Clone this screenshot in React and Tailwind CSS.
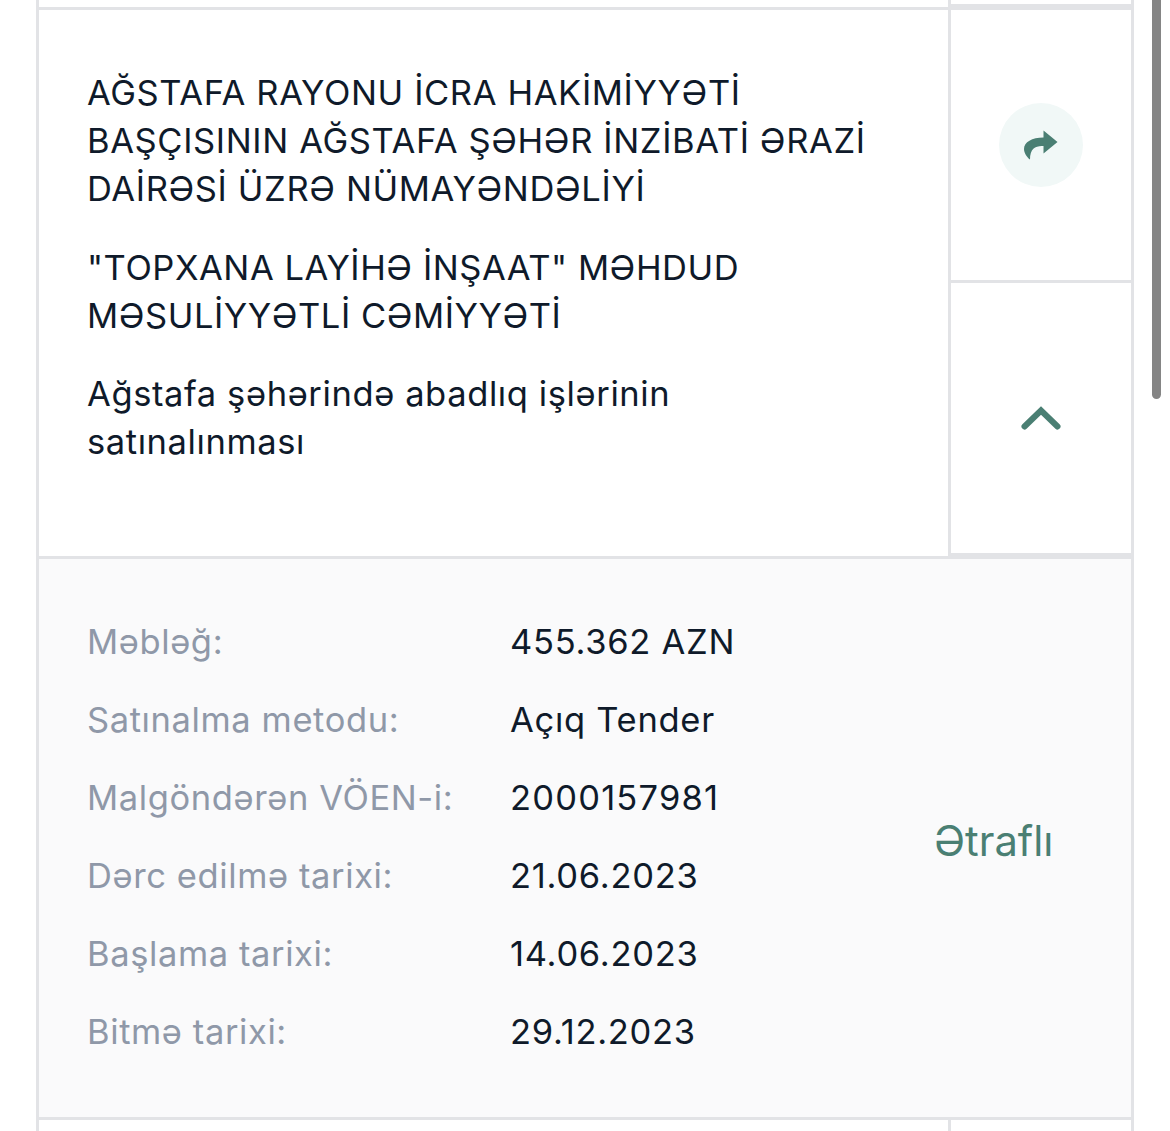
import React from "react";

const rows = [
  ["Məbləğ:", "455.362 AZN"],
  ["Satınalma metodu:", "Açıq Tender"],
  ["Malgöndərən VÖEN-i:", "2000157981"],
  ["Dərc edilmə tarixi:", "21.06.2023"],
  ["Başlama tarixi:", "14.06.2023"],
  ["Bitmə tarixi:", "29.12.2023"],
];

export default function App() {
  return (
    <div className="relative w-[1170px] h-[1131px] overflow-hidden bg-white pl-[36px] text-[#0f1a2a] font-['Inter',sans-serif]">
      <div className="w-[1098px] h-[1131px] border-x-[3px] border-[#e2e3e6] flex flex-col">
        <div className="flex h-[7px] shrink-0">
          <div className="flex-1" />
          <div className="w-[183px] border-l-[3px] border-b-[3px] border-[#e2e3e6]" />
        </div>
        <div className="flex h-[552px] shrink-0 border-y-[3px] border-[#e2e3e6]">
          <div className="flex-1 pl-[48px] pt-[59px] text-[34.5px] leading-[48px] tracking-[0.62px]">
            <p className="w-[800px]">AĞSTAFA RAYONU İCRA HAKİMİYYƏTİ BAŞÇISININ AĞSTAFA ŞƏHƏR İNZİBATİ ƏRAZİ DAİRƏSİ ÜZRƏ NÜMAYƏNDƏLİYİ</p>
            <p className="w-[800px] mt-[31px] tracking-[0.55px]">"TOPXANA LAYİHƏ İNŞAAT" MƏHDUD MƏSULİYYƏTLİ CƏMİYYƏTİ</p>
            <p className="w-[640px] mt-[30px] tracking-[0.6px]">Ağstafa şəhərində abadlıq işlərinin satınalınması</p>
          </div>
          <div className="w-[183px] border-l-[3px] border-[#e2e3e6] flex flex-col">
            <div className="h-[273px] border-b-[3px] border-[#e2e3e6] flex items-center justify-center">
              <div className="w-[84px] h-[84px] rounded-full bg-[#f1f8f7] flex items-center justify-center">
                <svg width="34" height="30" viewBox="0 0 34 30">
                  <path d="M19.5 0.5 L33.5 12 L19.5 23.5 V16 C12 15.5 6 18 6 29.5 C3 27.5 0 23 0 19 C0 12 8 7.5 19.5 7.5 Z" fill="#4a7f73" />
                </svg>
              </div>
            </div>
            <div className="flex-1 border-b-[3px] border-[#e2e3e6] flex items-center justify-center">
              <svg width="42" height="26" viewBox="0 0 42 26" fill="none">
                <path d="M4.5 21.5 L21 5.5 L37.5 21.5" stroke="#4a7f73" strokeWidth="6" strokeLinecap="round" />
              </svg>
            </div>
          </div>
        </div>
        <div className="relative flex h-[561px] shrink-0 border-b-[3px] border-[#e2e3e6] bg-[#fafafb] pl-[48px] pt-[44px]">
          <div className="flex flex-col text-[34.5px] leading-[78px] tracking-[0.6px]">
            {rows.map(([a, b]) => (
              <div key={a} className="flex">
                <span className="w-[423px] text-[#8f98a8]">{a}</span>
                <span className={b === "2000157981" ? "tracking-[1.2px]" : "tracking-[0.72px]"}>{b}</span>
              </div>
            ))}
          </div>
          <span className="absolute left-[895px] top-[252px] text-[41.7px] leading-[60px] text-[#4a7f73]">Ətraflı</span>
        </div>
        <div className="flex flex-1">
          <div className="flex-1" />
          <div className="w-[183px] border-l-[3px] border-[#e2e3e6]" />
        </div>
      </div>
      <div className="absolute right-[9px] top-0 w-[9px] h-[399px] rounded-b-full bg-[#858585]" />
    </div>
  );
}
